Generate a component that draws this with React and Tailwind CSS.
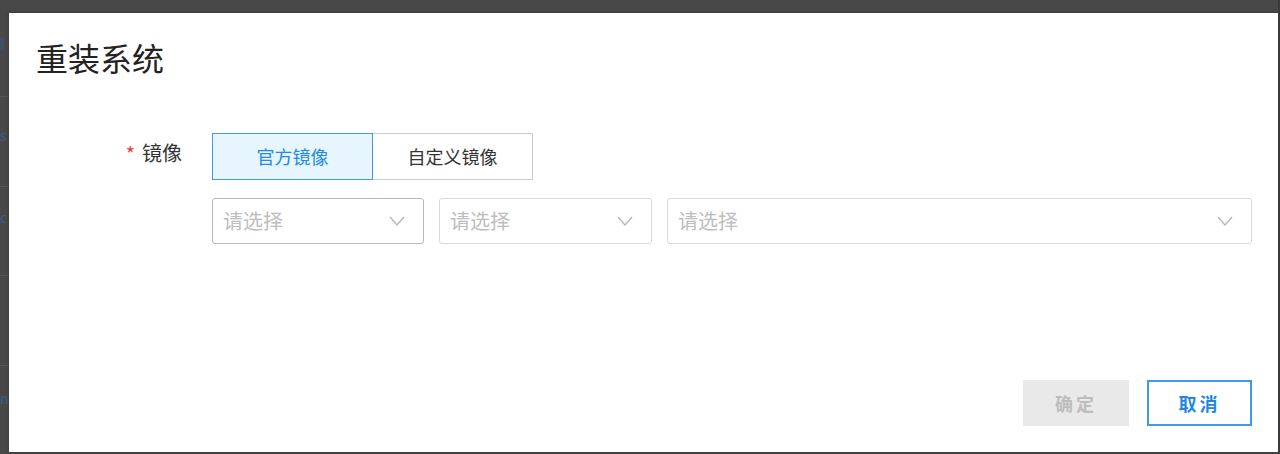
const font = { fontFamily: '"Noto Sans CJK SC", "Noto Sans", sans-serif' };

function Chevron() {
  return (
    <svg width="16" height="10" viewBox="0 0 16 10" fill="none" className="shrink-0">
      <polyline points="1,1 8,9 15,1" stroke="#b5b5b5" strokeWidth="1.2" />
    </svg>
  );
}

function Select({ className = "", border = "border-[#d9d9d9]" }) {
  return (
    <div
      className={`h-[46px] flex items-center justify-between pl-[10px] pr-[18px] border ${border} rounded-[3px] bg-white ${className}`}
    >
      <span className="text-[20px] text-[#bdbdbd]">请选择</span>
      <Chevron />
    </div>
  );
}

export default function App() {
  return (
    <div className="w-[1280px] h-[454px] bg-[#484848] flex overflow-hidden" style={font}>
      {/* page behind the overlay */}
      <div className="w-[9px] shrink-0 flex flex-col">
        <div className="h-[37px]" />
        <div className="h-[13px] w-[4px] bg-[#3f5166]" />
        <div className="h-[47px]" />
        <div className="h-[90px] border-t border-[#555] pt-[30px] text-[14px] leading-[16px] text-[#3f5f82]">s</div>
        <div className="h-[90px] border-t border-[#555] pt-[22px] text-[14px] leading-[16px] text-[#3f5f82]">c</div>
        <div className="h-[90px] border-t border-[#555]" />
        <div className="h-[90px] border-t border-[#555] pt-[24px] text-[14px] leading-[16px] text-[#3f5f82]">n</div>
      </div>

      {/* dialog */}
      <div className="mt-[13px] w-[1269px] h-[439px] bg-white flex flex-col pl-[27px] pr-[26px] pt-[23px] pb-[26px] shadow-[0_0_4px_rgba(0,0,0,0.25)]">
        <h1 className="text-[32px] leading-[42px] font-normal text-[#222]">重装系统</h1>

        <div className="mt-[55px] flex">
          <div className="w-[176px] shrink-0 flex justify-end pr-[30px] pt-[6px]">
            <span className="text-[#f04134] text-[20px] leading-[20px] mr-[7px] mt-[5px]">*</span>
            <span className="text-[20px] leading-[28px] text-[#333]">镜像</span>
          </div>

          <div className="flex-1 flex flex-col gap-[18px]">
            <div className="flex">
              <button className="w-[161px] h-[47px] bg-[#e6f5fe] border border-[#3d9be9] text-[18px] text-[#2489e4]">
                官方镜像
              </button>
              <button className="w-[160px] h-[47px] bg-white border border-l-0 border-[#cccccc] text-[18px] text-[#333]">
                自定义镜像
              </button>
            </div>

            <div className="flex gap-[15px]">
              <Select className="w-[212px]" border="border-[#b8b8b8]" />
              <Select className="w-[213px]" />
              <Select className="flex-1" />
            </div>
          </div>
        </div>

        <div className="mt-auto flex justify-end gap-[18px]">
          <button className="w-[106px] h-[46px] bg-[#e9e9e9] text-[18px] font-bold tracking-[3px] text-[#bdbdbd]">
            确定
          </button>
          <button className="w-[105px] h-[46px] bg-white border-2 border-[#3d9be9] text-[18px] font-bold tracking-[3px] text-[#1f87e3]">
            取消
          </button>
        </div>
      </div>
      <div className="w-[2px] bg-[#3a3a3a]" />
    </div>
  );
}
